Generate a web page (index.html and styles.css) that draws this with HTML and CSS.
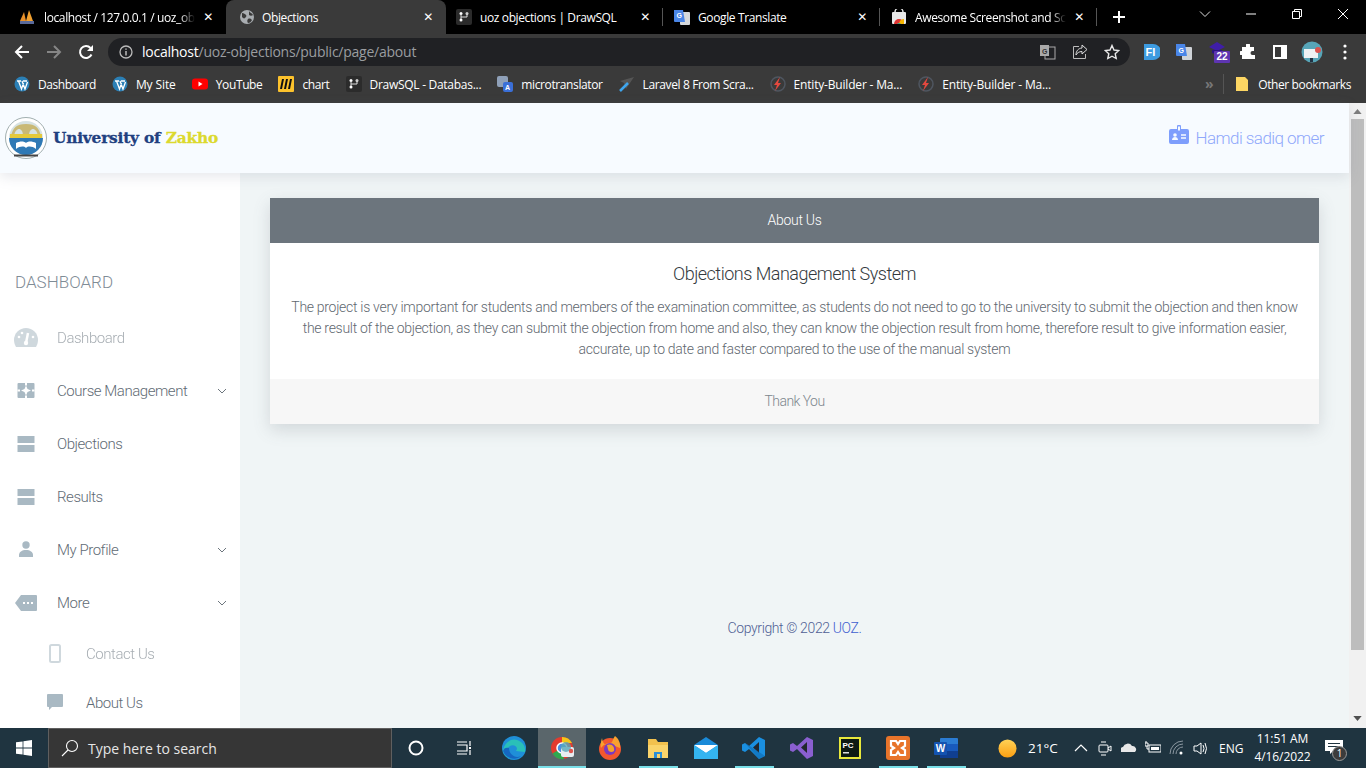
FILE: index.html
```html
<!DOCTYPE html>
<html lang="en">
<head>
<meta charset="utf-8">
<title>Objections</title>
<link rel="stylesheet" href="styles.css">
</head>
<body>
<div class="browser">
  <div class="tabstrip">
    <div class="tab t1">
      <svg class="fav" viewBox="0 0 16 16"><path d="M1 12 5 3l2 9z" fill="#e8902a"/><path d="M7 12 10 1l4 11z" fill="#f0a030"/><rect x="1" y="12" width="14" height="3" fill="#5a6a9a"/></svg>
      <span class="tabtitle fade">localhost / 127.0.0.1 / uoz_ob</span><span class="x">✕</span>
    </div>
    <div class="tab t2 active">
      <svg class="fav" viewBox="0 0 16 16"><circle cx="8" cy="8" r="7" fill="#a9adb1"/><path d="M3 4c2 0 3 1 4 2s0 2-1 3-2 0-3-1zM10 2c1 2 3 2 4 4-1 1-3 1-4 0zM9 10c2-1 3 0 4 1-1 2-2 3-4 3-1-1-1-3 0-4z" fill="#3a3a3a"/></svg>
      <span class="tabtitle">Objections</span><span class="x">✕</span>
    </div>
    <div class="tab t3 sep">
      <svg class="fav" viewBox="0 0 16 16"><rect width="16" height="16" rx="2" fill="#2b2b2b"/><circle cx="5" cy="4.500" r="1.500" fill="#fff"/><circle cx="5" cy="11" r="1.500" fill="#fff"/><circle cx="11" cy="4.500" r="1.500" fill="#ccc"/><path d="M5 5v5M5 8h6V5" stroke="#ddd" fill="none"/></svg>
      <span class="tabtitle">uoz objections | DrawSQL</span><span class="x">✕</span>
    </div>
    <div class="tab t4 sep">
      <svg class="fav" viewBox="0 0 16 16"><rect x="6" y="3" width="10" height="13" rx="1" fill="#d5d8dc"/><path d="M0 1h9l2 12H1a1 1 0 0 1-1-1z" fill="#4a86e8"/><text x="2.500" y="9" class="favtxt">G</text></svg>
      <span class="tabtitle">Google Translate</span><span class="x">✕</span>
    </div>
    <div class="tab t5 sep">
      <svg class="fav" viewBox="0 0 16 16"><rect x="1" y="3" width="14" height="12" rx="1" fill="#e8e8e8"/><path d="M4 3a4 4 0 0 1 8 0" stroke="#ddd" fill="none" stroke-width="1.500"/><path d="M3 15a5 5 0 0 1 10 0z" fill="#d33"/><path d="M8 15a5 5 0 0 1 5-5v5z" fill="#f4b400"/><path d="M6 15a2.500 2.500 0 0 1 4 0z" fill="#3a8"/></svg>
      <span class="tabtitle fade">Awesome Screenshot and Sc</span><span class="x">✕</span>
    </div>
    <span class="newtab">
      <svg viewBox="0 0 12 12"><path d="M6 0v12M0 6h12" stroke="#fff" stroke-width="2"/></svg>
    </span>
    <div class="winctl">
      <svg class="w" viewBox="0 0 12 12"><path d="M1 3.500 6 8.500l5-5" stroke="#ddd" fill="none"/></svg>
      <svg class="w" viewBox="0 0 12 12"><path d="M1 6h10" stroke="#fff"/></svg>
      <svg class="w" viewBox="0 0 12 12"><path d="M1.500 3.500h7v7h-7zM3.500 3.500v-2h7v7h-2" stroke="#fff" fill="none"/></svg>
      <svg class="w" viewBox="0 0 12 12"><path d="M1 1l10 10M11 1 1 11" stroke="#fff"/></svg>
    </div>
  </div>
  <div class="toolbar">
    <svg class="nav" viewBox="0 0 16 16"><path d="M15 8H2M8 2 2 8l6 6" stroke="#fff" stroke-width="2" fill="none"/></svg>
    <svg class="nav" viewBox="0 0 16 16"><path d="M1 8h13M8 2l6 6-6 6" stroke="#868686" stroke-width="2" fill="none"/></svg>
    <svg class="nav" viewBox="0 0 16 16"><path d="M13.500 10.500A6 6 0 1 1 12.500 4" stroke="#fff" stroke-width="2" fill="none"/><path d="M15 1v6H9z" fill="#fff"/></svg>
    <div class="omnibox">
      <svg class="info" viewBox="0 0 14 14"><circle cx="7" cy="7" r="6" stroke="#bbb" stroke-width="1.300" fill="none"/><path d="M7 6v4.500M7 3.500v1.300" stroke="#bbb" stroke-width="1.500"/></svg>
      <span class="url"><b>localhost</b>/uoz-objections/public/page/about</span>
      <span class="omniend">
        <svg class="oi" viewBox="0 0 16 16"><rect x="5" y="3" width="10" height="12" fill="none" stroke="#aaa"/><rect x="0" y="1" width="9" height="11" fill="#aaa"/><text x="2" y="9.500" class="favtxt dark">G</text></svg>
        <svg class="oi" viewBox="0 0 16 16"><path d="M7 2.500H1.500v12h12V10" stroke="#bbb" fill="none"/><path d="M10 1l5 4.500L10 10V7.500C7 7.500 5 9 4 11c0-4 2-6.500 6-7z" stroke="#ddd" fill="none"/></svg>
        <svg class="oi" viewBox="0 0 16 16"><path d="m8 1.500 2 4.500 4.800.5-3.600 3.200 1 4.800L8 12.200l-4.200 2.300 1-4.800-3.600-3.200L6 6z" stroke="#e8e8e8" stroke-width="1.400" fill="none"/></svg>
      </span>
    </div>
    <div class="exts">
      <svg class="ext" viewBox="0 0 16 16"><path d="M0 0h9a8 8 0 0 1 0 16H0z" fill="#3d9be0"/><text x="1.500" y="12" class="favtxt big">FI</text></svg>
      <svg class="ext" viewBox="0 0 16 16"><rect x="6" y="3" width="10" height="13" rx="1" fill="#cfd3d8"/><path d="M0 0h9l2 12H1a1 1 0 0 1-1-1z" fill="#4a86e8"/><text x="2.500" y="8.500" class="favtxt">G</text></svg>
      <span class="ext badged">
        <svg viewBox="0 0 18 14"><path d="M9 0 17 5 9 9 1 5z" fill="#3f1ea8"/><path d="M4 8h10v3l-5 2-5-2z" fill="#2a1580"/></svg>
        <span class="badge">22</span>
      </span>
      <svg class="ext puzzle" viewBox="0 0 16 16"><path d="M6 1a2 2 0 0 1 4 0v2h4v4h-1.500a2 2 0 0 0 0 4H15v4H2v-4H1a2 2 0 0 1 0-4h1V3h4z" fill="#fff"/></svg>
      <svg class="ext panel" viewBox="0 0 14 14"><rect x="1" y="1" width="12" height="12" fill="none" stroke="#fff" stroke-width="2"/><rect x="8" y="1" width="5" height="12" fill="#fff"/></svg>
      <svg class="ext avatar" viewBox="0 0 22 22"><circle cx="11" cy="11" r="10.500" fill="#57a5b8"/><rect x="3" y="8" width="14" height="9" fill="#eef2f4"/><circle cx="17" cy="9" r="3" fill="#d9534f"/><rect x="9" y="17" width="3" height="4" fill="#234"/></svg>
      <svg class="ext dots" viewBox="0 0 4 16"><circle cx="2" cy="2" r="1.600" fill="#fff"/><circle cx="2" cy="8" r="1.600" fill="#fff"/><circle cx="2" cy="14" r="1.600" fill="#fff"/></svg>
    </div>
  </div>
  <div class="bookmarks">
    <span class="bm b-dash"><svg class="fav" viewBox="0 0 16 16"><circle cx="8" cy="8" r="7.500" fill="#2b7fb5"/><path d="M3 5h4M9 5h4M4.500 5l3 8 2-6M8 5l3 8 2.500-7" stroke="#fff" stroke-width="1.300" fill="none"/></svg>Dashboard</span>
    <span class="bm b-site"><svg class="fav" viewBox="0 0 16 16"><circle cx="8" cy="8" r="7.500" fill="#2b7fb5"/><path d="M3 5h4M9 5h4M4.500 5l3 8 2-6M8 5l3 8 2.500-7" stroke="#fff" stroke-width="1.300" fill="none"/></svg>My Site</span>
    <span class="bm"><svg class="fav" viewBox="0 0 16 16"><rect y="2.500" width="16" height="11" rx="3" fill="#f00"/><path d="m6.500 5.500 4 2.500-4 2.500z" fill="#fff"/></svg>YouTube</span>
    <span class="bm"><svg class="fav" viewBox="0 0 16 16"><rect width="16" height="16" rx="1" fill="#fcc22c"/><path d="M4 3 2 13h2l2-10zM8 3 6 13h2l2-10zM12 3l-2 10h2l2-10z" fill="#111"/></svg>chart</span>
    <span class="bm b-draw"><svg class="fav" viewBox="0 0 16 16"><rect width="16" height="16" rx="2" fill="#2b2b2b"/><circle cx="5" cy="4.500" r="1.500" fill="#fff"/><circle cx="5" cy="11" r="1.500" fill="#fff"/><circle cx="11" cy="4.500" r="1.500" fill="#ccc"/><path d="M5 5v5M5 8h6V5" stroke="#ddd" fill="none"/></svg>DrawSQL - Databas...</span>
    <span class="bm"><svg class="fav" viewBox="0 0 16 16"><rect width="11" height="11" rx="2" fill="#8fa0b8"/><rect x="6" y="6" width="10" height="10" rx="2" fill="#3a6fd8"/><text x="8" y="14" class="favtxt">A</text></svg>microtranslator</span>
    <span class="bm"><svg class="fav" viewBox="0 0 16 16"><path d="M15 1 1 5l4 2 2 6z" fill="#555"/><path d="M1 15 9 7" stroke="#3fa7ef" stroke-width="2.500"/></svg>Laravel 8 From Scra...</span>
    <span class="bm b-ent"><svg class="fav" viewBox="0 0 16 16"><circle cx="8" cy="8" r="7" fill="none" stroke="#4f5660" stroke-width="1.500"/><path d="M10 1 4 9h3l-2 6 6-8H8z" fill="#e5483f"/></svg>Entity-Builder - Ma...</span>
    <span class="bm b-ent"><svg class="fav" viewBox="0 0 16 16"><circle cx="8" cy="8" r="7" fill="none" stroke="#4f5660" stroke-width="1.500"/><path d="M10 1 4 9h3l-2 6 6-8H8z" fill="#e5483f"/></svg>Entity-Builder - Ma...</span>
    <span class="more">»</span>
    <span class="bm other"><svg class="fav" viewBox="0 0 16 16"><path d="M2 1h9l3 3v11H2z" fill="#fdd663"/></svg>Other bookmarks</span>
  </div>
</div>

<div class="page">
  <div class="viewport">
    <header class="topbar">
      <div class="brand">
        <svg class="logo" viewBox="0 0 42 42">
          <circle cx="21" cy="21" r="20.500" fill="#fff" stroke="#8a9a9a" stroke-width=".8"/>
          <circle cx="21" cy="21" r="17" fill="#d6e2e2"/>
          <path d="M6 19c2-8 5-12 15-12s13 4 15 12h-3c-1-5-3-7-5-7s-4 2-4 7h-6c0-5-2-7-4-7s-4 2-5 7z" fill="#c9b975"/>
          <path d="M4 21h34a17 17 0 0 1-34 0z" fill="#2f79b5"/>
          <rect x="5" y="17" width="32" height="4" fill="#e4c93a"/>
          <path d="M11 32c4-3 8-3 10-1 2-2 6-2 10 1v-6c-4-2-8-2-10 0-2-2-6-2-10 0z" fill="#fff"/>
          <rect x="9" y="37.500" width="24" height="2" fill="#444"/>
        </svg>
        <span class="wordmark">University of <em>Zakho</em></span>
      </div>
      <div class="user">
        <svg class="usericon" viewBox="0 0 20 20"><path d="M2 4h6V1.500a2 2 0 0 1 4 0V4h6a2 2 0 0 1 2 2v11a2 2 0 0 1-2 2H2a2 2 0 0 1-2-2V6a2 2 0 0 1 2-2z" fill="#7e9efc"/><rect x="9" y="1.500" width="2" height="4" fill="#f7fbff"/><circle cx="6" cy="10" r="1.800" fill="#f7fbff"/><path d="M3 15c0-4 6-4 6 0z" fill="#f7fbff"/><path d="M12 10h5M12 13h5" stroke="#f7fbff" stroke-width="1.300"/></svg>
        <span>Hamdi sadiq omer</span>
      </div>
    </header>
    <div class="below">
      <nav class="sidebar">
        <div class="sidehead">DASHBOARD</div>
        <a class="item faint"><svg class="ic" viewBox="0 0 24 20"><path d="M12 0a12 12 0 0 1 12 12c0 3-1 5-2 7H2c-1-2-2-4-2-7A12 12 0 0 1 12 0z" fill="#a9b9c3"/><path d="M14 5l-2 10" stroke="#fff" stroke-width="2.500"/><circle cx="12" cy="15" r="2.200" fill="#fff"/><circle cx="5" cy="9" r="1.300" fill="#fff"/><circle cx="8" cy="5" r="1.300" fill="#fff"/><circle cx="19" cy="9" r="1.300" fill="#fff"/></svg><span>Dashboard</span></a>
        <a class="item"><svg class="ic" viewBox="0 0 24 20"><rect x="3.500" y="2" width="17" height="15" rx="1" fill="#a9b9c3"/><path d="M12 2v2.500M12 14.500V17M3.500 9.500H6M18 9.500h2.500" stroke="#fff" stroke-width="2"/><path d="M12 4.500 13.500 8 17 9.500 13.500 11 12 14.500 10.500 11 7 9.500 10.500 8z" fill="#fff"/></svg><span>Course Management</span><svg class="chev" viewBox="0 0 10 6"><path d="M1 1l4 4 4-4" stroke="#6c757d" fill="none"/></svg></a>
        <a class="item"><svg class="ic" viewBox="0 0 24 20"><rect x="3.500" y="2" width="17" height="7" fill="#a9b9c3"/><rect x="3.500" y="11" width="17" height="7" fill="#a9b9c3"/></svg><span>Objections</span></a>
        <a class="item"><svg class="ic" viewBox="0 0 24 20"><rect x="3.500" y="2" width="17" height="7" fill="#a9b9c3"/><rect x="3.500" y="11" width="17" height="7" fill="#a9b9c3"/></svg><span>Results</span></a>
        <a class="item"><svg class="ic" viewBox="0 0 24 20"><circle cx="12" cy="5" r="3.700" fill="#a9b9c3"/><path d="M5 17v-2c0-3 3-5 7-5s7 2 7 5v2z" fill="#a9b9c3"/></svg><span>My Profile</span><svg class="chev" viewBox="0 0 10 6"><path d="M1 1l4 4 4-4" stroke="#6c757d" fill="none"/></svg></a>
        <a class="item"><svg class="ic" viewBox="0 0 24 20"><path d="M7 2h15a1 1 0 0 1 1 1v14a1 1 0 0 1-1 1H7l-6-8z" fill="#a9b9c3"/><path d="M9 10h2M13 10h2M17 10h2" stroke="#fff" stroke-width="2"/></svg><span>More</span><svg class="chev" viewBox="0 0 10 6"><path d="M1 1l4 4 4-4" stroke="#6c757d" fill="none"/></svg></a>
        <a class="subitem faint"><svg class="ic" viewBox="0 0 24 20"><rect x="7" y="1" width="10" height="17" rx="1.500" fill="none" stroke="#a9b9c3" stroke-width="2"/></svg><span>Contact Us</span></a>
        <a class="subitem"><svg class="ic" viewBox="0 0 24 20"><path d="M5 1h14a1 1 0 0 1 1 1v11a1 1 0 0 1-1 1H9l-3 3v-3H5a1 1 0 0 1-1-1V2a1 1 0 0 1 1-1z" fill="#a9b9c3"/></svg><span>About Us</span></a>
      </nav>
      <main class="content">
        <section class="card">
          <div class="cardhead">About Us</div>
          <div class="cardbody">
            <h5>Objections Management System</h5>
            <p>The project is very important for students and members of the examination committee, as students do not need to go to the university to submit the objection and then know<br>the result of the objection, as they can submit the objection from home and also, they can know the objection result from home, therefore result to give information easier,<br>accurate, up to date and faster compared to the use of the manual system</p>
          </div>
          <div class="cardfoot">Thank You</div>
        </section>
        <footer class="copy">Copyright © 2022 <a>UOZ.</a></footer>
      </main>
    </div>
  </div>
  <div class="scrollbar">
    <svg class="arrow" viewBox="0 0 10 6"><path d="M5 0l5 6H0z" fill="#7d7d7d"/></svg>
    <div class="thumb"></div>
    <svg class="arrow" viewBox="0 0 10 6"><path d="M5 6 0 0h10z" fill="#505050"/></svg>
  </div>
</div>

<div class="taskbar">
  <div class="start"><svg viewBox="0 0 16 16"><path d="M0 2.300 6.600 1.400v6.200H0zM7.400 1.300 16 0v7.600H7.400zM0 8.400h6.600v6.200L0 13.700zM7.400 8.400H16V16l-8.600-1.300z" fill="#fff"/></svg></div>
  <div class="search"><svg viewBox="0 0 18 18"><circle cx="11" cy="7" r="5.500" fill="none" stroke="#fff" stroke-width="1.100"/><path d="M7 11 1 17" stroke="#fff" stroke-width="1.100"/></svg><span>Type here to search</span></div>
  <div class="tbi"><svg class="i16" viewBox="0 0 16 16"><circle cx="8" cy="8" r="6.500" fill="none" stroke="#fff" stroke-width="2"/></svg></div>
  <div class="tbi tv"><svg class="i18" viewBox="0 0 18 18"><path d="M2 3h10M2 15h10M2 6h10v6H2" stroke="#fff" fill="none" stroke-width="1.200"/><path d="M15 2v5M15 11v5" stroke="#fff" stroke-width="1.200"/><rect x="14" y="8" width="2" height="2" fill="#fff"/></svg></div>
  <div class="tbi"><svg class="i24" viewBox="0 0 24 24"><circle cx="12" cy="12" r="12" fill="#1f8fd8"/><path d="M1 14c2-8 9-12 14-10 6 2 9 7 8 12l-9-1c3-4-2-7-6-5-4 2-3 9 3 12-5 1-10-3-10-8z" fill="#2ac0b8"/><path d="M7 12c0 6 6 11 12 8-5 5-15 3-18-5 1-3 3-4 6-3z" fill="#1566c0"/></svg></div>
  <div class="tbi on"><svg class="i24" viewBox="0 0 24 24"><circle cx="12" cy="12" r="11" fill="#e33b2e"/><path d="M12 12 2.500 17.500A11 11 0 0 0 14 23z" fill="#2fa84f"/><path d="M12 1a11 11 0 0 1 10 6H12z" fill="#f5c518"/><circle cx="12" cy="12" r="5" fill="#4a90e2" stroke="#fff" stroke-width="1.500"/><rect x="11" y="11" width="13" height="10" rx="2" fill="#e8eef2"/><circle cx="16" cy="11" r="5" fill="#5aa7b8" opacity=".8"/><circle cx="21" cy="15" r="2.200" fill="#e0554d"/></svg></div>
  <div class="tbi"><svg class="i24" viewBox="0 0 24 24"><circle cx="12" cy="13" r="11" fill="#f2572e"/><path d="M4 2c-1 4-2 7-1 10 3-4 6-5 9-5 3 0 2-3 5-7 3 2 6 7 5 12L14 9C8 8 5 10 4 2z" fill="#f8a12f"/><circle cx="12" cy="13" r="6" fill="#7b3ac0"/><path d="M9 9c5-2 8 2 7 6-2 2-6 1-6-2z" fill="#f3a32c"/></svg></div>
  <div class="tbi line"><svg class="i24" viewBox="0 0 24 24"><path d="M2 3h8l2 3h10v16H2z" fill="#f2c14e"/><rect x="2" y="9" width="20" height="13" fill="#fad46b"/><rect x="8" y="16" width="8" height="6" fill="#2b8fd8"/><rect x="11" y="18" width="3" height="4" fill="#fad46b"/></svg></div>
  <div class="tbi"><svg class="i24" viewBox="0 0 24 24"><path d="M0 9 12 1l12 8v14H0z" fill="#1a8ad8"/><path d="M0 9h24L12 17z" fill="#fff"/><path d="M0 9l12 8 12-8v14H0z" fill="#34b4f0"/></svg></div>
  <div class="tbi line"><svg class="i24" viewBox="0 0 24 24"><path d="M17 1l6 3v16l-6 3L7 13l-4 3-3-1.500v-6L3 7l4 3z" fill="#1a8fe0"/><path d="M17 6 11 11.500 17 17z" fill="#22282e"/><path d="M0 8.500 3 7l14 16 6-3L3 7z" fill="#0f6fb8" opacity=".7"/></svg></div>
  <div class="tbi"><svg class="i24" viewBox="0 0 24 24"><path d="M17 1l6 3v16l-6 3L7 13l-4 3-3-1.500v-6L3 7l4 3z" fill="#8a5fd0"/><path d="M17 6 11 11.500 17 17z" fill="#22282e"/></svg></div>
  <div class="tbi"><svg class="i22" viewBox="0 0 22 22"><rect width="22" height="22" fill="#e8e83c"/><rect x="2" y="2" width="18" height="18" fill="#0d1a14"/><text x="3.500" y="11" class="pc">PC</text><rect x="4" y="15" width="6" height="1.500" fill="#ddd"/></svg></div>
  <div class="tbi line"><svg class="i24" viewBox="0 0 24 24"><rect width="24" height="24" rx="3" fill="#e8742a"/><path d="M5 5h5l2 3 2-3h5v5l-3 2 3 2v5h-5l-2-3-2 3H5v-5l3-2-3-2z" fill="none" stroke="#fff" stroke-width="2.200"/></svg></div>
  <div class="tbi line"><svg class="i24" viewBox="0 0 24 24"><rect x="6" y="2" width="18" height="20" rx="1" fill="#2b7cd3"/><rect x="6" y="8" width="18" height="7" fill="#185abd"/><rect x="6" y="15" width="18" height="7" fill="#103f91"/><rect x="0" y="6" width="13" height="13" rx="1" fill="#1453b0"/><text x="1.800" y="16" class="wd">W</text></svg></div>
  <div class="tray">
    <svg class="sun" viewBox="0 0 20 20"><defs><linearGradient id="s" x1="0" y1="0" x2="0" y2="1"><stop offset="0" stop-color="#ffd257"/><stop offset="1" stop-color="#fb9f12"/></linearGradient></defs><circle cx="10" cy="10" r="9.500" fill="url(#s)"/></svg>
    <span class="temp">21°C</span>
    <svg class="tr chevup" viewBox="0 0 16 16"><path d="M2 11l6-6 6 6" stroke="#fff" fill="none" stroke-width="1.200"/></svg>
    <svg class="tr" viewBox="0 0 16 16"><rect x="2" y="5" width="9" height="7" rx="1" fill="none" stroke="#fff"/><path d="M11 8l3-2v5l-3-2M4 2h5M4 15h5" stroke="#fff" fill="none"/></svg>
    <svg class="tr" viewBox="0 0 16 16"><path d="M0 12a3 3 0 0 1 2-5 5 5 0 0 1 9-1 3.500 3.500 0 0 1 3 6z" fill="#e8e8e8"/></svg>
    <svg class="tr" viewBox="0 0 16 16"><rect x="4" y="5" width="12" height="7" fill="none" stroke="#fff"/><rect x="6" y="7" width="8" height="3" fill="#fff"/><path d="M0 3h3v3H0zM1 1v2M2 6v3h2" stroke="#fff" fill="none"/></svg>
    <svg class="tr" viewBox="0 0 16 16"><path d="M1 14a13 13 0 0 1 13-13M4 14a10 10 0 0 1 10-10M7 14a7 7 0 0 1 7-7" stroke="#8b97a0" fill="none"/><circle cx="12" cy="13" r="1.500" fill="#fff"/></svg>
    <svg class="tr" viewBox="0 0 16 16"><path d="M1 6h3l4-3v11l-4-3H1z" fill="none" stroke="#fff"/><path d="M10 5q2 3.500 0 7M12 3q3 5.500 0 11" stroke="#fff" fill="none"/></svg>
    <span class="lang">ENG</span>
    <span class="clock"><span>11:51 AM</span><span>4/16/2022</span></span>
    <span class="notif"><svg viewBox="0 0 18 16"><path d="M0 1h18v11H8l-3 3v-3H0z" fill="#fff"/><path d="M3 4.500h12M3 7.500h12" stroke="#1f3440"/></svg><span class="ncount">1</span></span>
  </div>
</div>
</body>
</html>
```

FILE: styles.css
```css
* { box-sizing: border-box; }
html, body { margin: 0; padding: 0; height: 768px; overflow: hidden; }
body { display: flex; flex-direction: column; width: 1366px; font-family: "Roboto", "Liberation Sans", sans-serif; }
svg { display: block; flex: none; }

/* browser chrome */
.browser { height: 103px; flex: none; background: #3a3a3a; font-family: "Open Sans", "Noto Sans", sans-serif; color: #fff; }
.tabstrip { height: 34px; background: #000; display: flex; align-items: center; letter-spacing: -.38px; }
.tab { height: 34px; display: flex; align-items: center; padding: 0 9px 0 19px; font-size: 12px; position: relative; }
.t1 { width: 226px; }
.t2 { width: 220px; padding-left: 13px; }
.t3 { width: 217px; padding-left: 10px; }
.t4 { width: 217px; padding-left: 11px; }
.t5 { width: 217px; padding-left: 11px; }
.active { background: #3a3a3a; border-radius: 8px 8px 0 0; }
.sep::after { content: ""; position: absolute; right: 0; top: 8px; height: 18px; width: 1px; background: #555; }
.fav { width: 16px; height: 16px; margin-right: 8px; }
.tab .fav { margin-right: 8px; }
.t2 .fav { margin-right: 7px; }
.tabtitle { flex: 1; white-space: nowrap; }
.t1 .tabtitle { padding-left: 1px; }
.fade { -webkit-mask-image: linear-gradient(to right, #000 90%, transparent); mask-image: linear-gradient(to right, #000 90%, transparent); }
.x { width: 18px; text-align: center; font-size: 12px; margin-left: 4px; font-family: "DejaVu Sans", sans-serif; font-weight: 700; }
.newtab { margin-left: 16px; width: 12px; }
.winctl { margin-left: auto; display: flex; height: 34px; align-items: flex-start; padding-top: 8px; }
.w { width: 12px; height: 12px; margin-left: 34px; }
.winctl .w:first-child { margin-left: 0; }
.winctl { padding-right: 17px; }
.favtxt { font: 700 7px "Liberation Sans", sans-serif; fill: #fff; }
.favtxt.dark { fill: #333; }
.favtxt.big { font-size: 11px; }

.toolbar { height: 32px; display: flex; align-items: center; padding-left: 14px; margin-top: 2px; }
.nav { width: 16px; height: 16px; margin-right: 16px; }
.omnibox { margin-left: -2px; width: 1022px; height: 28px; border-radius: 14px; background: #202124; display: flex; align-items: center; padding: 0 10px 0 11px; }
.info { width: 14px; height: 14px; margin-right: 9px; }
.url { font-size: 14px; color: #9a9da0; white-space: nowrap; letter-spacing: -.24px; padding-bottom: 2px; }
.url b { font-weight: 400; color: #fff; }
.omniend { margin-left: auto; display: flex; gap: 16px; align-items: center; }
.oi { width: 16px; height: 16px; }
.exts { display: flex; align-items: center; margin-left: 14px; }
.ext { width: 16px; height: 16px; display: block; margin-right: 16px; }
.badged { position: relative; width: 22px; height: 20px; margin-right: 10px; }
.badged svg { width: 18px; height: 14px; }
.badge { position: absolute; left: 6px; top: 9px; width: 16px; height: 12px; background: #5e35b1; font: 700 10px/12px "Liberation Sans", sans-serif; text-align: center; border-radius: 1px; letter-spacing: 0; }
.puzzle { margin-right: 17px; }
.panel { width: 14px; height: 14px; margin-right: 14px; }
.avatar { width: 22px; height: 22px; margin-right: 21px; }
.dots { width: 4px; margin-right: 0; margin-left: -1px; }

.bookmarks { height: 35px; display: flex; align-items: center; padding: 0 0 3px 14px; font-size: 12px; letter-spacing: -.38px; }
.bm { display: flex; align-items: center; margin-right: 16px; white-space: nowrap; }
.b-dash { letter-spacing: -.45px; }
.b-site { letter-spacing: -.1px; }
.b-draw { letter-spacing: -.28px; }
.b-ent { letter-spacing: -.18px; }
.more { margin-left: auto; color: #777; font-size: 14px; font-weight: 700; padding-right: 10px; border-right: 1px solid #555; margin-right: 10px; line-height: 20px; }
.other { margin-right: 15px; }

/* page */
.page { height: 625px; flex: none; display: flex; background: #f0f5f6; }
.viewport { width: 1349px; display: flex; flex-direction: column; }
.topbar { height: 70px; flex: none; background: #f7fbff; box-shadow: 0 4px 12px rgba(120, 130, 150, .18); display: flex; align-items: center; justify-content: space-between; padding: 0 25px 0 5px; position: relative; z-index: 2; }
.brand { display: flex; align-items: center; gap: 6px; }
.logo { width: 42px; height: 42px; }
.wordmark { font: 700 15.400px "DejaVu Serif", serif; color: #21407f; white-space: nowrap; letter-spacing: -.2px; -webkit-text-stroke: .3px currentColor; }
.wordmark em { font-style: normal; color: #dcd92e; }
.user { display: flex; align-items: center; gap: 6px; color: #8fa8fb; font-size: 17px; font-weight: 300; letter-spacing: -.55px; }
.usericon { width: 20px; height: 20px; margin-top: -6px; }

.below { flex: 1; display: flex; min-height: 0; }
.sidebar { width: 240px; flex: none; background: #fff; overflow: hidden; padding-top: 96px; color: #5f6b75; font-size: 15px; font-weight: 300; letter-spacing: -.45px; }
.sidehead { font-size: 17px; color: #7f8c96; height: 26px; line-height: 26px; padding-left: 15px; margin-bottom: 16px; letter-spacing: 0; }
.item, .subitem { display: flex; align-items: center; white-space: nowrap; }
.item { height: 53px; padding-left: 14px; }
.subitem { height: 49px; padding-left: 43px; }
.ic { width: 24px; height: 20px; margin-right: 19px; }
.faint { opacity: .55; }
.chev { width: 10px; height: 6px; margin-left: auto; margin-right: 13px; }

.content { flex: 1; min-width: 0; padding: 25px 30px 0; display: flex; flex-direction: column; }
.card { background: #fff; box-shadow: 0 6px 16px rgba(90, 100, 110, .2); text-align: center; }
.cardhead { height: 45px; line-height: 45px; background: #6c757d; color: #fff; font-size: 14px; font-weight: 300; letter-spacing: -.3px; }
.cardbody { height: 136px; padding-top: 20px; color: #5f6870; }
.cardbody h5 { margin: 0 0 12px; font-size: 18px; line-height: 22px; font-weight: 300; color: #343a40; letter-spacing: -.5px; }
.cardbody p { margin: 0; font-size: 14px; line-height: 21px; font-weight: 300; white-space: nowrap; letter-spacing: -.29px; }
.cardfoot { height: 45px; line-height: 45px; background: #f7f7f7; color: #7d868d; font-size: 14px; font-weight: 300; letter-spacing: -.55px; }
.copy { margin-top: 194px; text-align: center; font-size: 14px; line-height: 20px; font-weight: 300; color: #4f5f94; letter-spacing: -.38px; }
.copy a { color: #3f5fd0; }

.scrollbar { width: 17px; flex: none; background: #f1f1f1; display: flex; flex-direction: column; align-items: center; padding-top: 6px; }
.arrow { width: 9px; height: 5px; }
.thumb { width: 13px; height: 531px; margin: 5px 0 66px; background: #bdbdbd; }

/* taskbar */
.taskbar { height: 40px; flex: none; background: #1f3440; display: flex; align-items: stretch; color: #fff; font-family: "Open Sans", "Noto Sans", sans-serif; }
.start { width: 48px; display: flex; align-items: center; justify-content: center; }
.start svg { width: 16px; height: 16px; }
.search { width: 344px; background: #363636; border: 1px solid #5f5f5f; display: flex; align-items: center; padding-left: 12px; font-size: 14px; color: #e6e6e6; }
.search svg { width: 18px; height: 18px; margin-right: 9px; }
.tbi { width: 48px; display: flex; align-items: center; justify-content: center; position: relative; }
.tv { width: 50px; padding-right: 2px; }
.on { background: #5a666b; }
.on::after { content: ""; position: absolute; left: 0; right: 0; bottom: 0; height: 2px; background: #79dfe8; }
.line::after { content: ""; position: absolute; left: 5px; right: 4px; bottom: 0; height: 2px; background: #79dfe8; }
.i16 { width: 16px; height: 16px; }
.i18 { width: 18px; height: 18px; }
.i22 { width: 22px; height: 22px; }
.i24 { width: 24px; height: 24px; }
.pc { font: 700 8px "Liberation Sans", sans-serif; fill: #fff; }
.wd { font: 700 10px "Liberation Sans", sans-serif; fill: #fff; }
.tray { flex: 1; display: flex; align-items: center; padding-left: 28px; font-size: 13px; }
.sun { width: 19px; height: 19px; }
.temp { margin-left: 11px; width: 36px; font-size: 13.500px; }
.tr { width: 16px; height: 16px; margin-left: 8px; }
.chevup { margin-left: 9px; }
.lang { margin-left: 10px; font-size: 12px; width: 31px; }
.clock { display: flex; flex-direction: column; align-items: center; width: 65px; font-size: 12px; line-height: 18px; letter-spacing: -.1px; }
.notif { position: relative; margin-left: 10px; width: 18px; height: 16px; margin-top: -3px; }
.notif svg { width: 18px; height: 16px; }
.ncount { position: absolute; left: 7px; top: 7px; width: 15px; height: 15px; border-radius: 50%; background: #3c3c3c; border: 1px solid #999; font-size: 10px; line-height: 13px; text-align: center; }
```
